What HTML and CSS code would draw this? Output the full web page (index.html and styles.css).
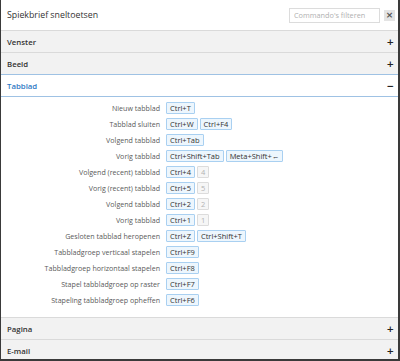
FILE: index.html
```html
<!DOCTYPE html>
<html lang="nl">
<head>
    <meta charset="UTF-8">
    <meta name="viewport" content="width=device-width, initial-scale=1.0">
    <title>Spiekbrief sneltoetsen</title>

    <link rel="stylesheet" href="styles.css">
</head>
<body>
    <div class="dialog">
        <header class="top">
            <h1>Spiekbrief sneltoetsen</h1>
            <input class="filter" type="text" placeholder="Commando's filteren">
            <button class="close">&times;</button>
        </header>

        <div class="sectionHead"><span>Venster</span><span class="sign">+</span></div>
        <div class="sectionHead"><span>Beeld</span><span class="sign">+</span></div>
        <div class="sectionHead open"><span>Tabblad</span><span class="sign">&minus;</span></div>

        <div class="list">
            <div class="row"><span class="label">Nieuw tabblad</span><span class="keys"><kbd>Ctrl+T</kbd></span></div>
            <div class="row"><span class="label">Tabblad sluiten</span><span class="keys"><kbd>Ctrl+W</kbd><kbd>Ctrl+F4</kbd></span></div>
            <div class="row"><span class="label">Volgend tabblad</span><span class="keys"><kbd>Ctrl+Tab</kbd></span></div>
            <div class="row"><span class="label">Vorig tabblad</span><span class="keys"><kbd>Ctrl+Shift+Tab</kbd><kbd>Meta+Shift+&larr;</kbd></span></div>
            <div class="row"><span class="label">Volgend (recent) tabblad</span><span class="keys"><kbd>Ctrl+4</kbd><kbd class="off">4</kbd></span></div>
            <div class="row"><span class="label">Vorig (recent) tabblad</span><span class="keys"><kbd>Ctrl+5</kbd><kbd class="off">5</kbd></span></div>
            <div class="row"><span class="label">Volgend tabblad</span><span class="keys"><kbd>Ctrl+2</kbd><kbd class="off">2</kbd></span></div>
            <div class="row"><span class="label">Vorig tabblad</span><span class="keys"><kbd>Ctrl+1</kbd><kbd class="off">1</kbd></span></div>
            <div class="row"><span class="label">Gesloten tabblad heropenen</span><span class="keys"><kbd>Ctrl+Z</kbd><kbd>Ctrl+Shift+T</kbd></span></div>
            <div class="row"><span class="label">Tabbladgroep verticaal stapelen</span><span class="keys"><kbd>Ctrl+F9</kbd></span></div>
            <div class="row"><span class="label">Tabbladgroep horizontaal stapelen</span><span class="keys"><kbd>Ctrl+F8</kbd></span></div>
            <div class="row"><span class="label">Stapel tabbladgroep op raster</span><span class="keys"><kbd>Ctrl+F7</kbd></span></div>
            <div class="row"><span class="label">Stapeling tabbladgroep opheffen</span><span class="keys"><kbd>Ctrl+F6</kbd></span></div>
        </div>

        <div class="sectionHead"><span>Pagina</span><span class="sign">+</span></div>
        <div class="sectionHead"><span>E-mail</span><span class="sign">+</span></div>
    </div>
</body>
</html>
```

FILE: styles.css
```css
html, body{
    margin: 0;
    padding: 0;
    background-color: white;
    font-family: "Open Sans", "Noto Sans", sans-serif;
}

.dialog{
    width: 400px;
    height: 361px;
    box-sizing: border-box;
    border-left: 1px solid #3a3a3a;
    border-right: 2px solid #3a3a3a;
    border-bottom: 2px solid #3a3a3a;
    overflow: hidden;
    background-color: white;
}

.top{
    display: flex;
    align-items: center;
    height: 30px;
    padding: 0 3px 0 6px;
    box-sizing: border-box;
}

h1{
    margin: 0;
    flex: 1;
    font-size: 8.8px;
    font-weight: normal;
    color: #333;
}

.filter{
    width: 91px;
    height: 15px;
    box-sizing: border-box;
    border: 1px solid #dcdcdc;
    padding: 0 4px;
    font-family: inherit;
    font-size: 7.3px;
    color: #333;
    outline: none;
}

.filter::placeholder{
    color: #b0b0b0;
}

.close{
    width: 11px;
    height: 11px;
    margin-left: 4px;
    padding: 0;
    border: none;
    background-color: #e4e4e4;
    color: #555;
    font-family: "DejaVu Sans", sans-serif;
    font-size: 9px;
    font-weight: bold;
    line-height: 11px;
}

.sectionHead{
    display: flex;
    justify-content: space-between;
    align-items: center;
    height: 22px;
    box-sizing: border-box;
    border-top: 1px solid #dadada;
    padding: 0 4px 0 6px;
    background-color: #f2f2f2;
    font-size: 7.8px;
    font-weight: 600;
    color: #333;
}

.sectionHead.open{
    height: 23px;
    border-top: 1px solid #9fc2e4;
    border-bottom: 1px solid #9fc2e4;
    background-color: white;
    color: #2f7ac4;
}

.sign{
    font-family: "DejaVu Sans", sans-serif;
    font-size: 9px;
    font-weight: bold;
    color: #222;
}

.list{
    padding: 3px 0 9px 0;
}

.row{
    display: flex;
    align-items: center;
    height: 16px;
}

.label{
    width: 159px;
    text-align: right;
    font-size: 7.1px;
    color: #5a5a5a;
}

.keys{
    display: flex;
    gap: 2px;
    margin-left: 6px;
}

kbd{
    display: block;
    height: 12px;
    box-sizing: border-box;
    padding: 0 3px;
    border: 1px solid #a9d0f1;
    border-radius: 1px;
    background-color: #edf6fd;
    font-family: "Open Sans", "Noto Sans", sans-serif;
    font-size: 7.5px;
    line-height: 10px;
    color: #333;
}

kbd.off{
    border-color: #dcdcdc;
    background-color: #f6f6f6;
    color: #b3b3b3;
}
```
